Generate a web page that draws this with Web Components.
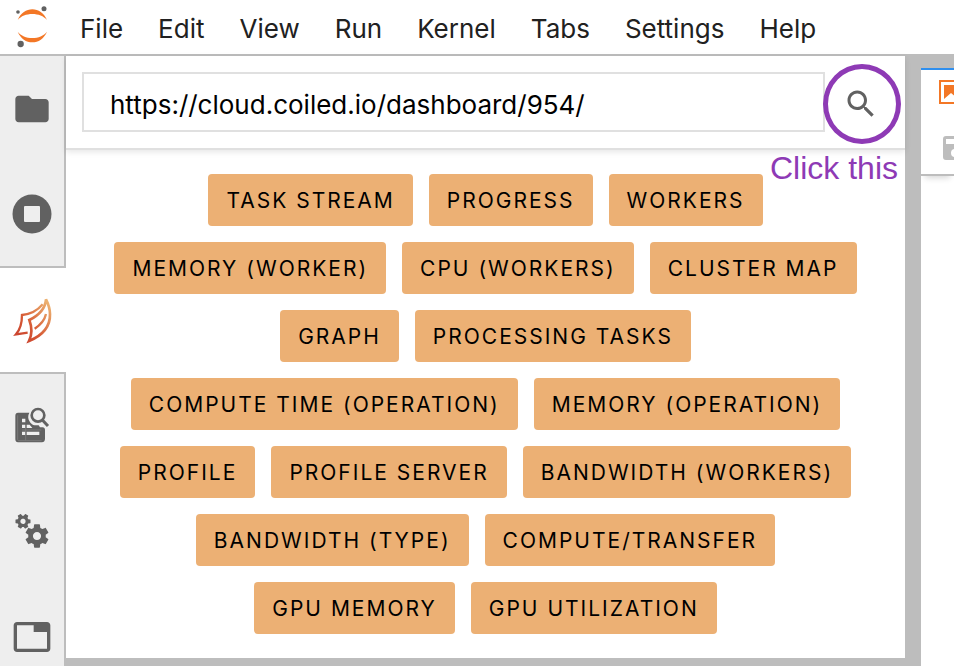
<!DOCTYPE html>
<html lang="en">
<head>
<meta charset="utf-8">
<title>JupyterLab</title>
<style>
  html, body { margin: 0; height: 100%; overflow: hidden; }
  body { font-family: Inter, "Liberation Sans", sans-serif; color: #212121; background: #fff; }
</style>
</head>
<body>
<lab-shell>
  <lab-menubar slot="menu"></lab-menubar>
  <lab-sidebar slot="side"></lab-sidebar>
  <dask-panel slot="panel">
    <dask-search slot="search" value="https://cloud.coiled.io/dashboard/954/"></dask-search>
    <dask-button>TASK STREAM</dask-button>
    <dask-button>PROGRESS</dask-button>
    <dask-button>WORKERS</dask-button>
    <dask-button>MEMORY (WORKER)</dask-button>
    <dask-button>CPU (WORKERS)</dask-button>
    <dask-button>CLUSTER MAP</dask-button>
    <dask-button>GRAPH</dask-button>
    <dask-button>PROCESSING TASKS</dask-button>
    <dask-button>COMPUTE TIME (OPERATION)</dask-button>
    <dask-button>MEMORY (OPERATION)</dask-button>
    <dask-button>PROFILE</dask-button>
    <dask-button>PROFILE SERVER</dask-button>
    <dask-button>BANDWIDTH (WORKERS)</dask-button>
    <dask-button>BANDWIDTH (TYPE)</dask-button>
    <dask-button>COMPUTE/TRANSFER</dask-button>
    <dask-button>GPU MEMORY</dask-button>
    <dask-button>GPU UTILIZATION</dask-button>
  </dask-panel>
  <lab-document slot="main"></lab-document>
</lab-shell>

<script>
const define = (name, html, setup) => customElements.define(name, class extends HTMLElement {
  constructor() {
    super();
    this.attachShadow({ mode: 'open' }).innerHTML = html;
  }
  connectedCallback() { if (setup) setup(this, this.shadowRoot); }
});

define('lab-shell', `
<style>
  :host { display: flex; flex-direction: column; height: 100vh; overflow: hidden; }
  .body { flex: 1; min-height: 0; display: flex; background: #bdbdbd; }
  .panel { flex: 1; min-width: 0; display: flex; padding-bottom: 8px; }
  .main { flex: none; display: flex; padding: 12px 0 0 16px; }
</style>
<slot name="menu"></slot>
<div class="body">
  <slot name="side"></slot>
  <div class="panel"><slot name="panel"></slot></div>
  <div class="main"><slot name="main"></slot></div>
</div>`);

define('lab-menubar', `
<style>
  :host { display: flex; align-items: center; height: 54px; flex: none; border-bottom: 2px solid #bdbdbd; background: #fff; }
  svg { display: block; flex: none; margin: 0 24px 0 8px; }
  nav { display: flex; gap: 35px; padding-top: 4px; }
  button { border: 0; background: none; padding: 0; margin: 0; font: 26px/32px Inter, "Liberation Sans", sans-serif; color: #212121; }
</style>
<svg width="48" height="54" viewBox="24 0 144 162" aria-hidden="true">
  <g fill="#f37726"><path d="M53 60C62 39 79 28 97 28s35 11 44 32C131 48 115 42 97 42S63 48 53 60z"/>
  <path d="M53 95c9 21 26 32 44 32s35-11 44-32c-10 12-26 19-44 19S63 107 53 95z"/></g>
  <g fill="#616161"><circle cx="132" cy="26" r="7.500"/><circle cx="54" cy="36" r="5.500"/><circle cx="62" cy="132" r="9.500"/></g>
</svg>
<nav>
  <button>File</button><button>Edit</button><button>View</button><button>Run</button><button>Kernel</button><button>Tabs</button><button>Settings</button><button>Help</button>
</nav>`);

const gear = 'M19.43 12.98c.04-.32.07-.64.07-.98s-.03-.66-.07-.98l2.11-1.650c.19-.15.24-.42.12-.64l-2-3.460c-.12-.22-.39-.3-.61-.22l-2.490 1c-.52-.4-1.080-.73-1.690-.98l-.38-2.650C14.460 2.180 14.250 2 14 2h-4c-.25 0-.46.18-.49.42l-.38 2.650c-.61.25-1.170.59-1.690.98l-2.490-1c-.23-.09-.49 0-.61.22l-2 3.460c-.13.22-.07.49.12.64l2.110 1.650c-.04.32-.07.65-.07.98s.03.66.07.98l-2.110 1.650c-.19.15-.24.42-.12.64l2 3.460c.12.22.39.3.61.22l2.490-1c.52.4 1.080.73 1.690.98l.38 2.650c.03.24.24.42.49.42h4c.25 0 .46-.18.49-.42l.38-2.650c.61-.25 1.170-.59 1.690-.98l2.490 1c.23.09.49 0 .61-.22l2-3.460c.12-.22.07-.49-.12-.64l-2.110-1.650zM12 15.500c-1.930 0-3.500-1.570-3.500-3.500s1.570-3.500 3.500-3.500 3.500 1.570 3.500 3.500-1.570 3.500-3.500 3.500z';

define('lab-sidebar', `
<style>
  :host { display: flex; flex-direction: column; flex: none; width: 66px; overflow: hidden; }
  button { flex: none; box-sizing: border-box; height: 106px; padding: 0; border: 0; border-right: 2px solid #bdbdbd; background: #eee; display: grid; place-items: center; }
  button.before { border-bottom: 2px solid #bdbdbd; }
  button.active { background: #fff; border-right-color: #fff; height: 104px; }
  button.after { border-top: 2px solid #bdbdbd; }
  svg { display: block; fill: #616161; }
</style>
<button aria-label="File Browser"><svg width="40" height="40" viewBox="0 0 24 24"><path d="M10 4H4c-1.100 0-2 .9-2 2v12c0 1.100.9 2 2 2h16c1.100 0 2-.9 2-2V8c0-1.100-.9-2-2-2h-8z"/></svg></button>
<button class="before" aria-label="Running Sessions"><svg width="40" height="40" viewBox="0 0 40 40"><circle cx="20" cy="20" r="19.500"/><rect x="12" y="12" width="16" height="16" rx="1" fill="#eee"/></svg></button>
<button class="active" aria-label="Dask" aria-pressed="true"><svg width="48" height="56" viewBox="0 0 144 168">
  <defs><linearGradient id="wing" gradientUnits="userSpaceOnUse" x1="30" y1="125" x2="125" y2="40"><stop offset="0" stop-color="#cc4630"/><stop offset=".35" stop-color="#d65a35"/><stop offset="1" stop-color="#ecb070"/></linearGradient></defs>
  <g fill="none" stroke="url(#wing)" stroke-width="8" stroke-miterlimit="3">
    <path d="M59 122L24 127Q42 106 42 69Q80 66 104 37" stroke-width="7" stroke-miterlimit="4"/>
    <path d="M114 22C112 50 94 69 64 84Q77 118 63 147C102 131 127 103 126 66C126 48 120 34 114 22z"/>
    <path d="M80 110C100 97 110 84 114 66" stroke-width="7"/>
  </g></svg></button>
<button class="after" aria-label="Property Inspector"><svg width="48" height="48" viewBox="0 0 144 144">
  <path d="M30 32h34c-5 9-4 18 0 25 4 8 10 12 16 13h12l4 6h8c4 0 7 3 7 7v28c0 6-4 10-9 10H30c-5 0-8-4-8-9V41c0-6 3-9 8-9z"/>
  <path d="M42 50h10v11H42zM42 68h10v10H42zM42 89h10v10H42zM56 68h9l8 10H56zM56 89h38v10H56z" fill="#eee"/>
  <path d="M29 40v72c0 3 1 4 4 4h68" fill="none" stroke="#858585" stroke-width="2"/>
  <path d="M53 70v45M42 84h58" stroke="#858585" stroke-width="2"/>
  <circle cx="90" cy="40" r="17" fill="#eee"/>
  <circle cx="90" cy="40" r="19" fill="none" stroke="#616161" stroke-width="8"/><path d="M103 54l17 18" stroke="#616161" stroke-width="9"/>
</svg></button>
<button aria-label="Settings"><svg width="48" height="48" viewBox="0 0 144 144">
  <path transform="translate(87 87) scale(3.500) translate(-12 -12)" d="${gear}"/>
  <path transform="translate(45 43) rotate(30) scale(2.250) translate(-12 -12)" d="${gear}"/>
</svg></button>
<button aria-label="Open Tabs"><svg width="40" height="40" viewBox="0 0 24 24"><path d="M21 3H3c-1.100 0-2 .9-2 2v14c0 1.100.9 2 2 2h18c1.100 0 2-.9 2-2V5c0-1.100-.9-2-2-2zm0 16H3V5h10v4h8z"/></svg></button>`);

define('dask-panel', `
<style>
  :host { display: flex; flex-direction: column; flex: 1; min-width: 0; background: #fff; }
  .grid { display: flex; flex-wrap: wrap; justify-content: center; align-content: flex-start; gap: 16px; padding: 24px; }
</style>
<slot name="search"></slot>
<div class="grid"><slot></slot></div>`);

define('dask-search', `
<style>
  :host { display: flex; position: relative; padding: 16px 0 16px 16px; border-bottom: 2px solid #e0e0e0; box-shadow: 0 2px 6px rgba(0,0,0,.1); }
  input { flex: 1; min-width: 0; box-sizing: border-box; height: 60px; padding: 4px 26px 0; border: 2px solid #e0e0e0; border-radius: 0; background: #fff; color: #000; font: 26px Inter, "Liberation Sans", sans-serif; }
  button { flex: none; width: 80px; padding: 4px 8px 0 0; border: 0; background: none; display: grid; place-items: center; }
  button svg { display: block; fill: #616161; }
  .note { position: absolute; top: 8px; right: 4px; display: flex; flex-direction: column; align-items: flex-end; pointer-events: none; color: #8e3ab5; font: 32px/36px "Liberation Sans", Arial, sans-serif; white-space: nowrap; }
  .ring { box-sizing: border-box; width: 78px; height: 80px; border: 5px solid; border-radius: 50%; margin-bottom: 6px; }
  .text { padding-right: 3px; }
</style>
<input type="text" aria-label="Dask dashboard URL">
<button aria-label="Search"><svg width="36" height="36" viewBox="0 0 24 24"><path d="M15.500 14h-.79l-.28-.27C15.410 12.590 16 11.110 16 9.500 16 5.910 13.090 3 9.500 3S3 5.910 3 9.500 5.910 16 9.500 16c1.610 0 3.090-.59 4.230-1.570l.27.28v.79l5 4.990L20.490 19l-4.990-5zm-6 0C7.010 14 5 11.990 5 9.500S7.010 5 9.500 5 14 7.010 14 9.500 11.990 14 9.500 14z"/></svg></button>
<div class="note"><div class="ring"></div><div class="text">Click this</div></div>`,
(el, root) => { root.querySelector('input').value = el.getAttribute('value'); });

define('dask-button', `
<style>
  :host { display: block; }
  button { display: block; box-sizing: border-box; height: 52px; padding: 2px 18px 0; border: 0; border-radius: 4px; background: #ecb074; color: #000; font: 21px/50px Inter, "Liberation Sans", sans-serif; letter-spacing: 2px; white-space: nowrap; }
</style>
<button><slot></slot></button>`);

define('lab-document', `
<style>
  :host { display: flex; flex-direction: column; width: 33px; background: #fff; overflow: hidden; }
  .tab, .tools { flex: none; display: flex; align-items: center; box-sizing: border-box; }
  .tab { height: 50px; border-top: 2px solid #2f8fee; padding: 0 0 4px 18px; }
  .tools { height: 58px; border-bottom: 2px solid #bdbdbd; padding: 4px 0 0 22px; box-shadow: 0 6px 6px -4px rgba(0,0,0,.16); }
  button { border: 0; padding: 0; background: none; display: block; flex: none; }
  svg { display: block; flex: none; }
</style>
<div class="tab"><svg width="24" height="24" viewBox="0 0 24 24" aria-label="Notebook"><rect x="1" y="1" width="22" height="22" fill="#fff" stroke="#f37726" stroke-width="2"/><path d="M5 5h14v14l-7-6-7 6z" fill="#f37726"/></svg></div>
<div class="tools"><button aria-label="Save"><svg width="24" height="24" viewBox="0 0 24 24" fill="#bdbdbd"><path fill-rule="evenodd" d="M3 0h16l5 5v16c0 2-1 3-3 3H3c-2 0-3-1-3-3V3c0-2 1-3 3-3zM3 3v5h13V3zM12 13a4 4 0 1 0 0 8 4 4 0 0 0 0-8z"/></svg></button></div>`);
</script>
</body>
</html>
